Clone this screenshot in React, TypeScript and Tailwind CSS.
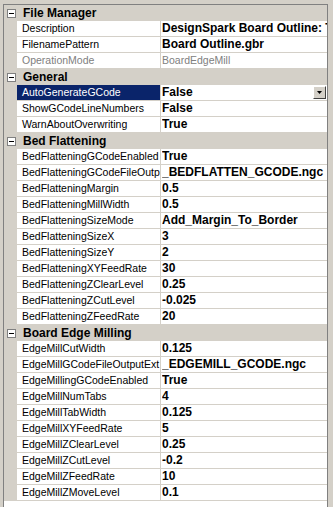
type Prop = {
  name: string;
  value: string;
  selected?: boolean;
  readOnly?: boolean;
};

type Category = {
  title: string;
  props: Prop[];
};

// names/values that the grid clips are kept as far as they show
const categories: Category[] = [
  {
    title: "File Manager",
    props: [
      { name: "Description", value: "DesignSpark Board Outline: T" },
      { name: "FilenamePattern", value: "Board Outline.gbr" },
      { name: "OperationMode", value: "BoardEdgeMill", readOnly: true },
    ],
  },
  {
    title: "General",
    props: [
      { name: "AutoGenerateGCode", value: "False", selected: true },
      { name: "ShowGCodeLineNumbers", value: "False" },
      { name: "WarnAboutOverwriting", value: "True" },
    ],
  },
  {
    title: "Bed Flattening",
    props: [
      { name: "BedFlatteningGCodeEnabled", value: "True" },
      { name: "BedFlatteningGCodeFileOutp", value: "_BEDFLATTEN_GCODE.ngc" },
      { name: "BedFlatteningMargin", value: "0.5" },
      { name: "BedFlatteningMillWidth", value: "0.5" },
      { name: "BedFlatteningSizeMode", value: "Add_Margin_To_Border" },
      { name: "BedFlatteningSizeX", value: "3" },
      { name: "BedFlatteningSizeY", value: "2" },
      { name: "BedFlatteningXYFeedRate", value: "30" },
      { name: "BedFlatteningZClearLevel", value: "0.25" },
      { name: "BedFlatteningZCutLevel", value: "-0.025" },
      { name: "BedFlatteningZFeedRate", value: "20" },
    ],
  },
  {
    title: "Board Edge Milling",
    props: [
      { name: "EdgeMillCutWidth", value: "0.125" },
      { name: "EdgeMillGCodeFileOutputExt", value: "_EDGEMILL_GCODE.ngc" },
      { name: "EdgeMillingGCodeEnabled", value: "True" },
      { name: "EdgeMillNumTabs", value: "4" },
      { name: "EdgeMillTabWidth", value: "0.125" },
      { name: "EdgeMillXYFeedRate", value: "5" },
      { name: "EdgeMillZClearLevel", value: "0.25" },
      { name: "EdgeMillZCutLevel", value: "-0.2" },
      { name: "EdgeMillZFeedRate", value: "10" },
      { name: "EdgeMillZMoveLevel", value: "0.1" },
    ],
  },
];

const CollapseBox = () => (
  <div className="ml-[3px] w-[9px] h-[9px] flex-none border border-[#808080] bg-white flex items-center justify-center">
    <div className="w-[5px] h-[1px] bg-black" />
  </div>
);

const DropButton = () => (
  <div className="mr-[1px] w-[13px] h-[13px] flex-none bg-[#d4d0c8] border-t border-l border-t-white border-l-white border-r border-b border-r-[#404040] border-b-[#404040] flex items-center justify-center">
    <svg width="5" height="3" viewBox="0 0 5 3">
      <path d="M0 0H5L2.5 3Z" fill="#000" />
    </svg>
  </div>
);

const PropRow = ({ prop }: { prop: Prop }) => (
  <div className="flex h-[16px] flex-none">
    <div className="w-[13px] flex-none bg-[#d4d0c8]" />
    <div
      className={`w-[144px] flex-none border-b border-r border-[#d4d0c8] pl-[5px] overflow-hidden whitespace-nowrap text-[10.5px] leading-[15px] ${
        prop.selected
          ? "bg-[#0a246a] text-white"
          : prop.readOnly
          ? "bg-white text-[#808080]"
          : "bg-white text-black"
      }`}
    >
      {prop.name}
    </div>
    <div className="flex-1 min-w-0 flex items-center border-b border-[#d4d0c8] bg-white pl-[1px]">
      <span
        className={`flex-1 min-w-0 overflow-hidden whitespace-nowrap leading-[15px] ${
          prop.readOnly
            ? "text-[10.5px] text-[#808080]"
            : "text-[12px] font-bold text-black"
        }`}
      >
        {prop.value}
      </span>
      {prop.selected && <DropButton />}
    </div>
  </div>
);

export default function App() {
  return (
    <div
      className="w-[333px] h-[507px] bg-[#d4d0c8] pt-[4px] pl-[3px] pr-[5px] overflow-hidden"
      style={{ fontFamily: '"Liberation Sans", Arial, sans-serif' }}
    >
      <div className="h-full border-l border-t border-r border-[#808080] bg-white flex flex-col">
        {categories.map((cat) => (
          <div key={cat.title} className="flex flex-col">
            {/* category header */}
            <div className="flex items-center h-[16px] flex-none bg-[#d4d0c8]">
              <CollapseBox />
              <span className="ml-[7px] text-[12px] font-bold leading-[15px] text-black whitespace-nowrap">
                {cat.title}
              </span>
            </div>
            {cat.props.map((p) => (
              <PropRow key={p.name} prop={p} />
            ))}
          </div>
        ))}
      </div>
    </div>
  );
}
